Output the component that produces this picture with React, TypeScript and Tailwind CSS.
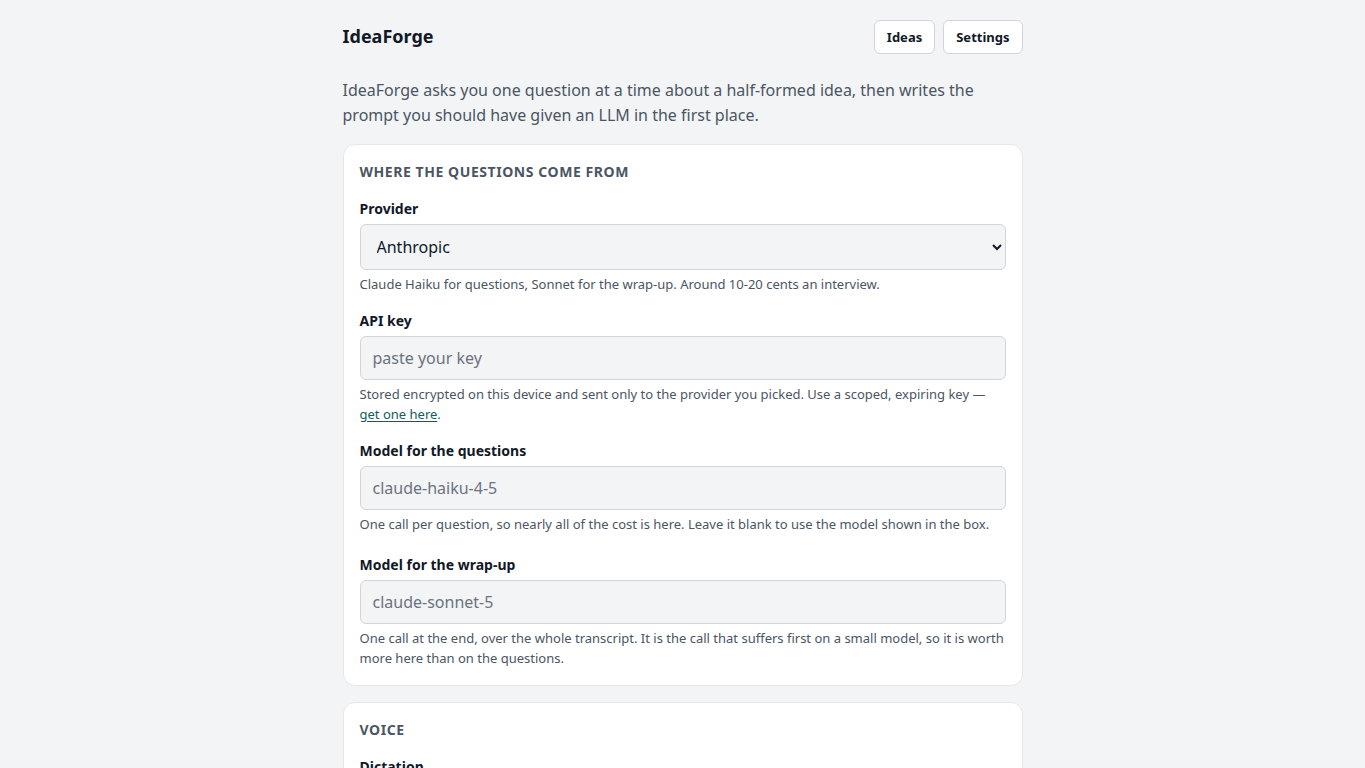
import React, { useState } from 'react';

const font = { fontFamily: '"Noto Sans", "Open Sans", sans-serif' };

interface FieldProps {
  label: string;
  children: React.ReactNode;
  help: React.ReactNode;
  className?: string;
}

const Field: React.FC<FieldProps> = ({ label, children, help, className }) => (
  <div className={className}>
    <label className="block text-[14px] leading-5 font-bold text-[#111827] mb-[5px]">{label}</label>
    {children}
    <p className="mt-1 text-[13px] leading-5 text-[#4b5563]">{help}</p>
  </div>
);

const inputClass =
  'w-full h-[44px] rounded-md border border-[#d1d5db] bg-[#f3f4f6] px-3 text-[16px] text-[#111827] placeholder-[#6b7280] focus:outline-none';

export default function App() {
  const [provider, setProvider] = useState('anthropic');
  const [apiKey, setApiKey] = useState('');
  const [askModel, setAskModel] = useState('');
  const [wrapModel, setWrapModel] = useState('');

  return (
    <div className="min-h-screen bg-[#f3f4f6] text-[#111827]" style={font}>
      <div className="mx-auto w-[680px] pt-5">
        {/* top bar */}
        <header className="flex items-center justify-between">
          <h1 className="text-[18px] font-bold leading-8 pb-[2px] text-[#111827]">IdeaForge</h1>
          <nav className="flex gap-2">
            <button className="h-[34px] px-3 pt-px rounded-md border border-[#d1d5db] bg-white text-[13px] font-bold text-[#111827]">
              Ideas
            </button>
            <button className="h-[34px] px-3 pt-px rounded-md border border-[#d1d5db] bg-white text-[13px] font-bold text-[#111827]">
              Settings
            </button>
          </nav>
        </header>

        <p className="mt-6 text-[16px] leading-[25px] text-[#4b5563]">
          IdeaForge asks you one question at a time about a half-formed idea, then writes the prompt you should have
          given an LLM in the first place.
        </p>

        {/* provider settings */}
        <section className="mt-4 rounded-xl border border-[#e5e7eb] bg-white px-4 pt-[17px] pb-[17px]">
          <h2 className="text-[14px] leading-5 font-bold uppercase tracking-[0.04em] text-[#4b5563] mb-[17px]">
            Where the questions come from
          </h2>

          <Field
            label="Provider"
            className="mb-[17px]"
            help="Claude Haiku for questions, Sonnet for the wrap-up. Around 10-20 cents an interview."
          >
            <select
              value={provider}
              onChange={(e) => setProvider(e.target.value)}
              className="w-full h-[46px] rounded-md border border-[#d1d5db] bg-[#f3f4f6] pl-3 pr-2 text-[16px] text-[#111827]"
              style={font}
            >
              <option value="anthropic">Anthropic</option>
              <option value="openai">OpenAI</option>
              <option value="google">Google</option>
            </select>
          </Field>

          <Field
            label="API key"
            className="mb-[17px]"
            help={
              <>
                Stored encrypted on this device and sent only to the provider you picked. Use a scoped, expiring key —{' '}
                <a href="#" className="text-[#115e59] underline underline-offset-2">
                  get one here
                </a>
                .
              </>
            }
          >
            <input
              type="password"
              value={apiKey}
              onChange={(e) => setApiKey(e.target.value)}
              placeholder="paste your key"
              className={inputClass}
              style={font}
            />
          </Field>

          <Field
            label="Model for the questions"
            className="mb-[21px]"
            help="One call per question, so nearly all of the cost is here. Leave it blank to use the model shown in the box."
          >
            <input
              value={askModel}
              onChange={(e) => setAskModel(e.target.value)}
              placeholder="claude-haiku-4-5"
              className={inputClass}
              style={font}
            />
          </Field>

          <Field
            label="Model for the wrap-up"
            help="One call at the end, over the whole transcript. It is the call that suffers first on a small model, so it is worth more here than on the questions."
          >
            <input
              value={wrapModel}
              onChange={(e) => setWrapModel(e.target.value)}
              placeholder="claude-sonnet-5"
              className={inputClass}
              style={font}
            />
          </Field>
        </section>

        {/* voice settings */}
        <section className="mt-4 rounded-xl border border-[#e5e7eb] bg-white px-4 pt-[17px] pb-[17px] mb-8">
          <h2 className="text-[14px] leading-5 font-bold uppercase tracking-[0.04em] text-[#4b5563] mb-[17px]">
            Voice
          </h2>
          <Field label="Dictation" help="Speak your answers instead of typing them.">
            <select className="w-full h-[46px] rounded-md border border-[#d1d5db] bg-[#f3f4f6] pl-3 pr-2 text-[16px]" style={font}>
              <option>Browser speech recognition</option>
            </select>
          </Field>
        </section>
      </div>
    </div>
  );
}
